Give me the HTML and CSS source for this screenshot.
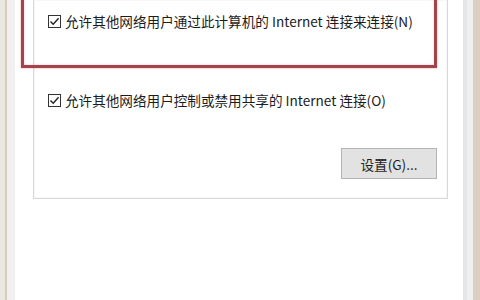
FILE: index.html
```html
<!DOCTYPE html>
<html lang="zh-CN">
<head>
<meta charset="utf-8">
<link rel="stylesheet" href="styles.css">
</head>
<body>
<div class="desk">
  <div class="edge"></div>
  <div class="frame">
    <div class="page">
      <div class="group">
        <label class="row row-first">
          <span class="box"><svg viewBox="0 0 13 13" width="13" height="13"><path d="M2.5 6.5 L5.2 9.3 L10.6 3.3" fill="none" stroke="#222" stroke-width="1.4"/></svg></span>
          <span class="txt">允许其他网络用户通过此计算机的 Internet 连接来连接(N)</span>
        </label>
        <label class="row row-second">
          <span class="box"><svg viewBox="0 0 13 13" width="13" height="13"><path d="M2.5 6.5 L5.2 9.3 L10.6 3.3" fill="none" stroke="#222" stroke-width="1.4"/></svg></span>
          <span class="txt">允许其他网络用户控制或禁用共享的 Internet 连接(O)</span>
        </label>
        <div class="actions">
          <button class="btn" type="button">设置(G)...</button>
        </div>
      </div>
      <div class="mark"></div>
    </div>
  </div>
</div>
</body>
</html>
```

FILE: styles.css
```css
html, body {
  margin: 0;
  padding: 0;
  background: #ffffff;
}
body {
  font-family: "Noto Sans CJK SC", "Noto Sans", sans-serif;
  color: #1c1c1c;
}
.desk {
  display: flex;
  width: 480px;
  height: 300px;
  overflow: hidden;
}
.edge {
  width: 5px;
  background: #ebe8e4;
}
.frame {
  flex: 1;
  display: flex;
  border-left: 2px solid #d6ccba;
  border-right: 7px solid #dccfbf;
  background: #f0f0f0;
  padding-left: 8px;
  padding-right: 6px;
}
.page {
  position: relative;
  flex: 1;
  background: #ffffff;
  border-right: 4px solid #e6e6e6;
  padding-left: 18px;
  padding-right: 15px;
}
.group {
  border: 1px solid #d9d9d9;
  border-top: none;
  box-shadow: inset 0 0 0 1px #f7f7f7;
  padding: 14px 10px 19px 14px;
}
.row {
  display: flex;
  align-items: center;
  gap: 4px;
  height: 15px;
  font-size: 13.6px;
  line-height: 15px;
  white-space: nowrap;
}
.row-second {
  margin-top: 64px;
}
.box {
  width: 11px;
  height: 11px;
  border: 1px solid #333333;
  background: #ffffff;
  display: flex;
  align-items: center;
  justify-content: center;
  flex: none;
}
.box svg {
  display: block;
  flex: none;
}
.actions {
  display: flex;
  justify-content: flex-end;
  margin-top: 40px;
}
.btn {
  width: 96px;
  height: 31px;
  border: 1px solid #b4b4b4;
  background: #e2e2e2;
  font-family: "Noto Sans CJK SC", "Noto Sans", sans-serif;
  font-size: 13.6px;
  color: #1c1c1c;
  padding: 0;
}
.mark {
  position: absolute;
  left: 6px;
  top: -10px;
  width: 410px;
  height: 72px;
  border: 3px solid #a5434d;
  box-shadow: 0 0 2px rgba(200, 80, 90, 0.5), inset 0 0 2px rgba(200, 80, 90, 0.4);
}
```
